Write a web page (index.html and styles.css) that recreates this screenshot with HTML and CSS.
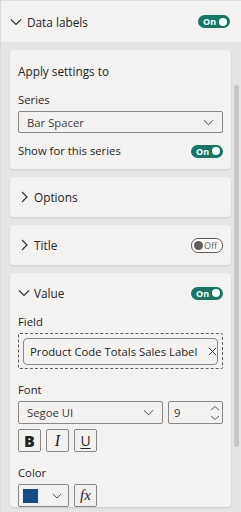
FILE: index.html
```html
<!DOCTYPE html>
<html lang="en">
<head>
    <meta charset="UTF-8">
    <title>Format pane - Data labels</title>
    <link rel="stylesheet" href="styles.css">
</head>
<body>
    <div class="pane-head">
        <span class="title">
            <svg class="chev" viewBox="0 0 12 12"><path d="M1 3.5 L6 8.5 L11 3.5"/></svg>
            Data labels
        </span>
        <span class="toggle on">On<i></i></span>
    </div>

    <div class="pane-body">
        <div class="cards">
            <section class="card">
                <p class="heading">Apply settings to</p>
                <p class="lbl series">Series</p>
                <div class="select">
                    <span>Bar Spacer</span>
                    <svg class="chev" viewBox="0 0 12 12"><path d="M1 3.5 L6 8.5 L11 3.5"/></svg>
                </div>
                <div class="row show">
                    <span>Show for this series</span>
                    <span class="toggle on">On<i></i></span>
                </div>
            </section>

            <section class="card">
                <div class="card-head">
                    <span class="title">
                        <svg class="chev" viewBox="0 0 12 12"><path d="M4 1 L9 6 L4 11"/></svg>
                        Options
                    </span>
                </div>
            </section>

            <section class="card">
                <div class="card-head">
                    <span class="title">
                        <svg class="chev" viewBox="0 0 12 12"><path d="M4 1 L9 6 L4 11"/></svg>
                        Title
                    </span>
                    <span class="toggle off"><i></i>Off</span>
                </div>
            </section>

            <section class="card value">
                <div class="card-head">
                    <span class="title">
                        <svg class="chev" viewBox="0 0 12 12"><path d="M1 3.5 L6 8.5 L11 3.5"/></svg>
                        Value
                    </span>
                    <span class="toggle on">On<i></i></span>
                </div>
                <p class="lbl">Field</p>
                <div class="well">
                    <div class="field">
                        <span>Product Code Totals Sales Label</span>
                        <svg class="x" viewBox="0 0 10 10"><path d="M1 1 L9 9 M9 1 L1 9"/></svg>
                    </div>
                </div>

                <p class="lbl gap">Font</p>
                <div class="font-row">
                    <div class="select font">
                        <span>Segoe UI</span>
                        <svg class="chev" viewBox="0 0 12 12"><path d="M1 3.5 L6 8.5 L11 3.5"/></svg>
                    </div>
                    <div class="select size">
                        <span>9</span>
                        <svg class="spin" viewBox="0 0 10 16"><path d="M1 5 L5 1.5 L9 5 M1 11 L5 14.5 L9 11"/></svg>
                    </div>
                </div>
                <div class="btns">
                    <span class="btn bold">B</span>
                    <span class="btn ital">I</span>
                    <span class="btn under">U</span>
                </div>

                <p class="lbl gap">Color</p>
                <div class="btns">
                    <div class="picker">
                        <span class="swatch"></span>
                        <svg class="chev" viewBox="0 0 12 12"><path d="M1 3.5 L6 8.5 L11 3.5"/></svg>
                    </div>
                    <span class="btn fx">fx</span>
                </div>
            </section>
        </div>

        <div class="scrollbar"><div class="thumb"></div></div>
    </div>
</body>
</html>
```

FILE: styles.css
```css
body {
    margin: 0;
    width: 241px;
    height: 512px;
    overflow: hidden;
    font-family: "Open Sans", "Noto Sans", sans-serif;
    font-size: 11.3px;
    color: #252423;
    background: #e6e5e4;
    border-left: 1px solid #dcdad8;
    box-sizing: border-box;
}

p {
    margin: 0;
}

svg {
    display: block;
    fill: none;
    stroke: #323130;
    stroke-width: 1.2;
}

.pane-head {
    height: 42px;
    box-sizing: border-box;
    border-top: 1px solid #e1dfdd;
    background: #f3f2f1;
    display: flex;
    align-items: center;
    justify-content: space-between;
    padding: 0 11px 0 9px;
}

.title {
    display: flex;
    align-items: center;
    gap: 5px;
    font-size: 11.8px;
    line-height: 16px;
}

.title .chev {
    width: 12px;
    height: 12px;
}

.pane-body {
    display: flex;
    height: 470px;
}

.cards {
    width: 230px;
    padding: 8px 0 0 9px;
    box-sizing: border-box;
    display: flex;
    flex-direction: column;
    gap: 8px;
    flex-shrink: 0;
}

.card {
    background: #f3f2f1;
    border-radius: 4px;
    box-shadow: 0 1px 2px rgba(0, 0, 0, 0.12);
    padding: 0 8px;
}

.card:first-child {
    padding-top: 13px;
    padding-bottom: 10px;
}

.card-head {
    height: 40px;
    display: flex;
    align-items: center;
    justify-content: space-between;
}

.card-head .title {
    gap: 4px;
}

.heading {
    font-size: 11.8px;
    line-height: 16px;
}

.lbl {
    line-height: 16px;
    margin-bottom: 3px;
}

.lbl.series {
    margin-top: 13px;
}

.lbl.gap {
    margin-top: 13px;
}

.card.value .lbl:first-of-type {
    margin-top: 1px;
}

.select {
    height: 22px;
    box-sizing: border-box;
    border: 1px solid #8a8886;
    border-radius: 2px;
    display: flex;
    align-items: center;
    justify-content: space-between;
    padding: 0 8px;
    color: #3b3a39;
}

.select .chev {
    width: 11px;
    height: 11px;
    stroke-width: 1;
}

.row {
    display: flex;
    align-items: center;
    justify-content: space-between;
    line-height: 16px;
}

.row.show {
    margin-top: 10px;
}

/* toggles */
.toggle {
    width: 32px;
    height: 13px;
    box-sizing: border-box;
    border-radius: 7px;
    display: flex;
    align-items: center;
    font-size: 9px;
    font-weight: 700;
    line-height: 13px;
}

.toggle i {
    width: 8px;
    height: 8px;
    border-radius: 50%;
}

.toggle.on {
    background: #117865;
    color: #fff;
    padding: 0 3px 0 5px;
    justify-content: space-between;
}

.toggle.on i {
    background: #fff;
}

.toggle.off {
    height: 15px;
    border: 1px solid #605e5c;
    background: #faf9f8;
    color: #605e5c;
    font-weight: 400;
    padding: 0 3px 0 2px;
    gap: 1px;
}

.toggle.off i {
    width: 9px;
    height: 9px;
    background: #605e5c;
}

/* field well */
.well {
    border: 1px dashed #605e5c;
    border-radius: 2px;
    padding: 4px 4px 3px;
}

.field {
    height: 27px;
    box-sizing: border-box;
    border: 1px solid #8a8886;
    border-radius: 4px;
    display: flex;
    align-items: center;
    justify-content: space-between;
    padding: 0 0 0 6px;
    white-space: nowrap;
    overflow: hidden;
}

.field .x {
    width: 9px;
    height: 9px;
    stroke-width: 1.1;
    flex-shrink: 0;
}

.font-row {
    display: flex;
    gap: 5px;
}

.select.font {
    width: 145px;
    height: 23px;
}

.select.size {
    flex: 1;
    height: 23px;
    padding: 0 2px 0 5px;
}

.select .spin {
    width: 10px;
    height: 16px;
    stroke: #605e5c;
    stroke-width: 1;
}

.btns {
    display: flex;
    gap: 5px;
    margin-top: 5px;
}

.lbl + .btns {
    margin-top: 0;
}

.btn {
    width: 23px;
    height: 23px;
    box-sizing: border-box;
    border: 1px solid #8a8886;
    border-radius: 2px;
    display: flex;
    align-items: center;
    justify-content: center;
    font-size: 15px;
}

.btn.bold {
    font-weight: 800;
    font-size: 16px;
}

.btn.ital {
    font-family: "Liberation Serif", serif;
    font-style: italic;
    font-size: 16px;
}

.btn.under {
    text-decoration: underline;
    text-underline-offset: 2px;
    font-size: 14px;
}

.btn.fx {
    font-family: "Liberation Serif", serif;
    font-style: italic;
    font-size: 15px;
}

.picker {
    width: 51px;
    height: 23px;
    box-sizing: border-box;
    border: 1px solid #8a8886;
    border-radius: 2px;
    display: flex;
    align-items: center;
    padding: 0 6px 0 4px;
    justify-content: space-between;
}

.swatch {
    width: 15px;
    height: 14px;
    background: #124a8a;
}

.picker .chev {
    width: 10px;
    height: 10px;
    stroke-width: 1;
}

/* scrollbar */
.scrollbar {
    width: 10px;
    flex-shrink: 0;
    padding-top: 43px;
    display: flex;
    justify-content: center;
}

.thumb {
    width: 5px;
    height: 362px;
    border-radius: 3px;
    background: #c8c6c4;
}
```
